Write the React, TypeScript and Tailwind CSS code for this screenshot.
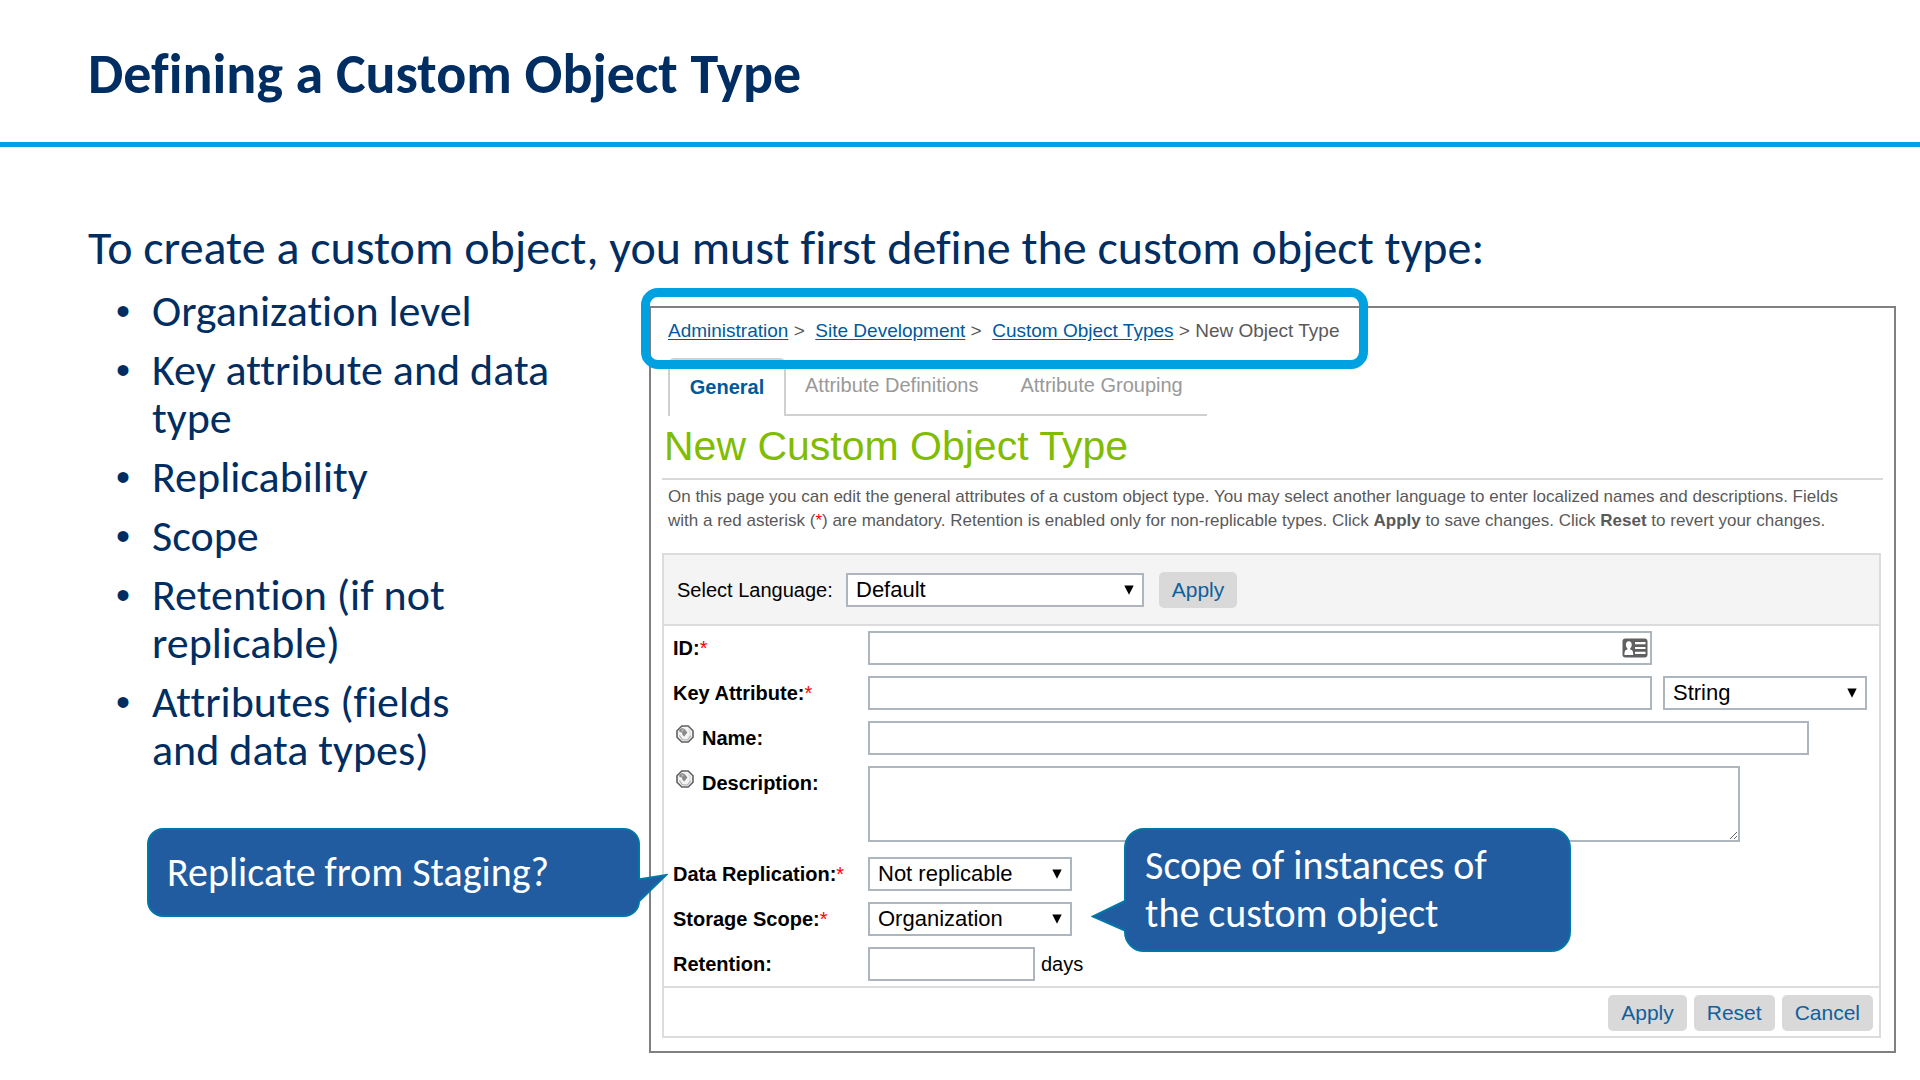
import React from "react";
import type { ReactNode } from "react";

const FIELD = "h-[34px] rounded-none border-2 border-[#adb5be] bg-white text-[22px] text-black outline-none";
const BUTTON =
  "flex h-9 items-center justify-center rounded-[5px] bg-[#d9d9d9] px-[13px] text-[21px] leading-6 text-[#10609c]";

function Select({ id, label, value, className }: { id: string; label?: string; value: string; className: string }) {
  return (
    <div className={`relative shrink-0 ${className}`}>
      <select id={id} aria-label={label} defaultValue={value} className={`${FIELD} w-full appearance-none pl-2 leading-[30px]`}>
        <option>{value}</option>
      </select>
      <svg viewBox="0 0 10 10" className="pointer-events-none absolute top-3 right-[10px] size-[10px]" aria-hidden="true">
        <path d="M0.3 0.5h9.4L5 9.8z" fill="#000" />
      </svg>
    </div>
  );
}

function Globe() {
  return (
    <svg viewBox="0 0 18 18" className="mt-1 mr-2 ml-[3px] size-[18px] shrink-0" aria-hidden="true">
      <path d="M5.800 1h6.400L17 5.800v6.400L12.200 17H5.800L1 12.200V5.800z" fill="#f4f4f4" stroke="#606060" strokeWidth="1.600" />
      <path d="M3.200 4.800 6 3l2.600 1 2.800 3.400L8.200 11.600 6.400 9.800 6 7.400 3.400 7z" fill="#8a8a8a" />
      <path d="M5.400 4.600 7.800 4.400 7.200 6.400H5.600z" fill="#bdbdbd" />
      <path d="M11.400 3.200 14.800 6v4.800l-2.200 1.600 1-4.400z" fill="#e0e0e0" />
      <path d="M3.400 10.400 6.200 14.600 11.400 15l3.400-4.200" fill="none" stroke="#b4b4b4" strokeWidth="1.200" />
    </svg>
  );
}

function ContactCard() {
  return (
    <svg viewBox="0 0 26 20" className="pointer-events-none absolute top-[7px] right-1 h-5 w-[26px]" aria-hidden="true">
      <rect x="0.5" y="0.5" width="25" height="19" rx="3" fill="#606060" />
      <ellipse cx="6.800" cy="6.800" rx="2.900" ry="3.500" fill="#fff" />
      <path d="M5.400 9h2.800v2.600c2 .4 3 1.400 3 5.400H2.400c0-4 1-5 3-5.400z" fill="#fff" />
      <path d="M13 4h10.500v2.200H13zM13 8.900h10.500v2.200H13zM13 13.800h10.500V16H13z" fill="#fff" />
    </svg>
  );
}

function Row({ htmlFor, label, required, globe, children }: { htmlFor: string; label: string; required?: boolean; globe?: boolean; children: ReactNode }) {
  return (
    <div className="flex items-start">
      <label htmlFor={htmlFor} className="flex w-[195px] shrink-0 text-[20px] leading-[34px] font-bold">
        {globe && <Globe />}
        {label}
        {required && <span className="font-normal text-[#ff0000]">*</span>}
      </label>
      {children}
    </div>
  );
}

function Bullet({ children }: { children: ReactNode }) {
  return (
    <li className="relative before:absolute before:-left-9 before:font-['Liberation_Sans'] before:text-[40px] before:content-['•']">
      {children}
    </li>
  );
}

const CRUMB = "text-[#00599c] underline underline-offset-2";
const BUBBLE = "border-2 border-[#0077a8] bg-[#215ca0] text-[40px] leading-[48px] text-white";

export default function App() {
  return (
    <div className="min-h-screen bg-white font-[Carlito,Calibri,Lato,sans-serif] text-[#002d62] [font-variant-ligatures:none]">
      <header className="border-b-[5px] border-[#00a1e0] px-[88px] pt-10 pb-[34px]">
        <h1 className="text-[56px] leading-[68px] font-bold">Defining a Custom Object Type</h1>
      </header>

      <main className="pt-[73px] pr-6 pl-[88px]">
        <p className="text-[48px] leading-[56px]">
          To create a custom object, you must first define the custom object type:
        </p>

        <div className="flex items-start">
          <div className="w-[561px] shrink-0 pt-[11px]">
            <ul className="flex flex-col gap-[11px] pr-16 pl-16 text-[44px] leading-[48px]">
              <Bullet>Organization level</Bullet>
              <Bullet>Key attribute and data type</Bullet>
              <Bullet>Replicability</Bullet>
              <Bullet>Scope</Bullet>
              <Bullet>Retention (if not replicable)</Bullet>
              <Bullet>
                Attributes (fields
                <br />
                and data types)
              </Bullet>
            </ul>

            <aside className={`${BUBBLE} relative z-10 mt-[54px] ml-[59px] w-[493px] rounded-2xl pt-[19px] pb-[18px] pl-[18px]`}>
              Replicate from Staging?
              <svg viewBox="0 0 32 30" className="absolute top-[43px] -right-[30px] h-[30px] w-8" aria-hidden="true">
                <path d="M0 6.800 30 2 2 29.200H0z" fill="#215ca0" />
                <path d="M2 6.600 30 2 2 29.200" fill="none" stroke="#0077a8" strokeWidth="2" />
              </svg>
            </aside>
          </div>

          <section className="relative mt-[30px] min-w-0 flex-1 border-2 border-[#808080] px-[11px] pb-[13px] font-['Liberation_Sans',Arial,sans-serif] text-black">
            <nav aria-label="Breadcrumb" className="relative pt-[11px] pb-[7px] pl-[6px] text-[19px] leading-6 whitespace-pre text-[#595959]">
              <a href="#administration" className={CRUMB}>Administration</a>
              {" >  "}
              <a href="#site-development" className={CRUMB}>Site Development</a>
              {" >  "}
              <a href="#custom-object-types" className={CRUMB}>Custom Object Types</a>
              {" > New Object Type"}
              <div className="pointer-events-none absolute -top-5 -left-[21px] z-10 h-[81px] w-[727px] rounded-[17px] border-[9px] border-[#00a1e0]" />
            </nav>

            <div role="tablist" className="mt-2 ml-[6px] flex h-[58px] w-[539px] max-w-full items-stretch text-[20px]">
              <button role="tab" aria-selected="true" className="w-[118px] shrink-0 rounded-t-md border-2 border-b-0 border-[#d0d0d0] pb-[2px] font-bold text-[#00599c]">
                General
              </button>
              <div className="flex flex-1 gap-[42px] border-b-2 border-[#d0d0d0] pb-[2px] pl-[19px] text-[#999]">
                <button role="tab" aria-selected="false">Attribute Definitions</button>
                <button role="tab" aria-selected="false">Attribute Grouping</button>
              </div>
            </div>

            <h2 className="border-b-2 border-[#d9d9d9] pt-[6px] pb-2 pl-[2px] text-[41px] leading-[48px] text-[#80bc00]">New Custom Object Type</h2>

            <p className="pt-[5px] pl-[6px] text-[17px] leading-6 text-[#595959]">
              On this page you can edit the general attributes of a custom object type. You may select another language to enter localized names and descriptions. Fields
              <br />
              with a red asterisk (<span className="text-[#ff0000]">*</span>) are mandatory. Retention is enabled only for non-replicable types. Click <b>Apply</b> to save changes. Click <b>Reset</b> to revert your changes.
            </p>

            <form className="mt-5 mr-[2px] border-2 border-[#dcdcdc]" onSubmit={(e) => e.preventDefault()}>
              <div className="flex items-center border-b-2 border-[#dcdcdc] bg-[#f4f4f4] pt-[17px] pb-4 pl-[13px] text-[20px]">
                <label htmlFor="language" className="w-[169px]">Select Language:</label>
                <Select id="language" value="Default" className="w-[298px]" />
                <button type="button" className={`${BUTTON} ml-[15px] w-[78px]`}>Apply</button>
              </div>

              <div className="flex flex-col gap-[11px] py-[5px] pr-3 pl-[9px]">
                <Row htmlFor="object-id" label="ID:" required>
                  <div className="relative mr-[215px] flex-1">
                    <input id="object-id" className={`${FIELD} block w-full pr-10 pl-2`} />
                    <ContactCard />
                  </div>
                </Row>
                <Row htmlFor="key-attribute" label="Key Attribute:" required>
                  <input id="key-attribute" className={`${FIELD} mr-[11px] min-w-0 flex-1 px-2`} />
                  <Select id="key-type" label="Key attribute data type" value="String" className="w-[204px]" />
                </Row>
                <Row htmlFor="name" label="Name:" globe>
                  <input id="name" className={`${FIELD} mr-[58px] min-w-0 flex-1 px-2`} />
                </Row>
                <Row htmlFor="description" label="Description:" globe>
                  <textarea id="description" className="mr-[127px] mb-1 h-[76px] min-w-0 flex-1 resize border-2 border-[#adb5be] px-2 text-[22px] outline-none" />
                </Row>
                <Row htmlFor="replication" label="Data Replication:" required>
                  <Select id="replication" value="Not replicable" className="w-[204px]" />
                </Row>
                <Row htmlFor="scope" label="Storage Scope:" required>
                  <Select id="scope" value="Organization" className="w-[204px]" />
                </Row>
                <Row htmlFor="retention" label="Retention:">
                  <input id="retention" className={`${FIELD} w-[167px] px-2`} />
                  <span className="pl-[6px] text-[20px] leading-[34px]">days</span>
                </Row>
              </div>

              <div className="flex justify-end gap-[7px] border-t-2 border-[#dcdcdc] pt-[7px] pr-[6px] pb-[5px]">
                <button type="submit" className={BUTTON}>Apply</button>
                <button type="reset" className={BUTTON}>Reset</button>
                <button type="button" className={BUTTON}>Cancel</button>
              </div>
            </form>

            <aside className={`${BUBBLE} absolute top-[520px] left-[473px] z-10 w-[447px] rounded-[20px] py-3 pl-[19px] font-[Carlito,Calibri,Lato,sans-serif]`}>
              Scope of instances of
              <br />
              the custom object
              <svg viewBox="0 0 36 34" className="absolute top-[69px] -left-[35px] h-[34px] w-9" aria-hidden="true">
                <path d="M36 1.500 2 17.500 36 32.500z" fill="#215ca0" />
                <path d="M34 2 2 17.500 34 31.500" fill="none" stroke="#0077a8" strokeWidth="2" />
              </svg>
            </aside>
          </section>
        </div>
      </main>
    </div>
  );
}
